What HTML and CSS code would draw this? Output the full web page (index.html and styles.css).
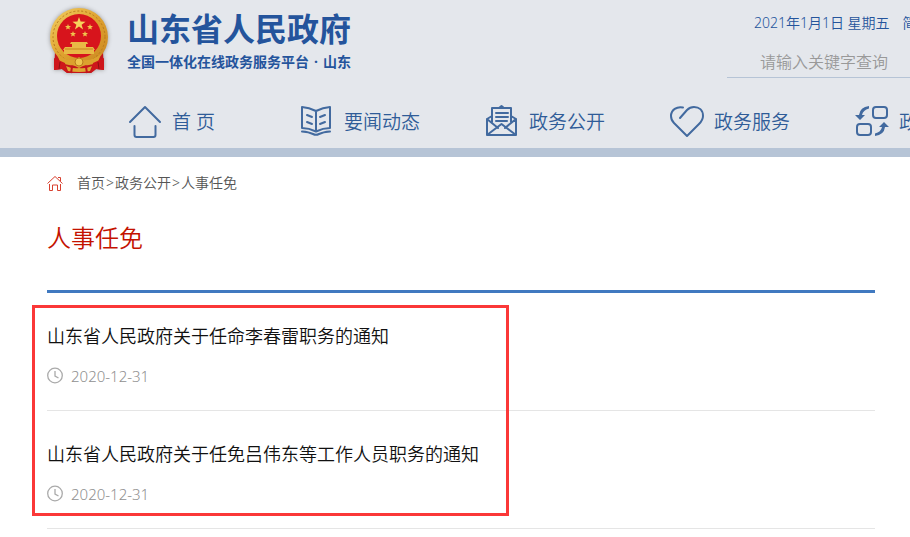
FILE: index.html
```html
<!DOCTYPE html>
<html lang="zh-CN">
<head>
  <meta charset="UTF-8">
  <title>人事任免</title>
  <meta name="viewport" content="width=device-width, initial-scale=1.0">
  <link rel="stylesheet" href="styles.css">
</head>
<body>
  <header class="header">
    <div class="top">
      <a class="brand" href="#">
        <svg class="emblem" viewBox="0 0 66 70" aria-hidden="true">
          <defs>
            <linearGradient id="gold" x1="0" y1="0" x2="1" y2="1">
              <stop offset="0" stop-color="#f3cf62"/>
              <stop offset="0.5" stop-color="#dfa22f"/>
              <stop offset="1" stop-color="#c9851f"/>
            </linearGradient>
          </defs>
          <path d="M8 46 L7 64 L15 63 L20 67 L44 67 L49 63 L57 64 L56 46Z" fill="#c4161c"/>
          <ellipse cx="32" cy="31" rx="29" ry="29" fill="url(#gold)"/>
          <ellipse cx="32" cy="31" rx="26" ry="26" fill="none" stroke="#b97a1c" stroke-width="1" stroke-dasharray="2 2"/>
          <ellipse cx="32" cy="30" rx="22" ry="22" fill="#d7141c"/>
          <path d="M32 11l1.600 4.600 5 .1-4 3 1.500 4.800-4.100-2.900-4.100 2.900 1.500-4.800-4-3 5-.1z" fill="#f6d35c"/>
          <g fill="#f0c44c">
            <path id="small-star" d="M21 18l.8 2 2.200.1-1.700 1.400.6 2.100-1.900-1.200-1.900 1.200.6-2.100-1.700-1.400 2.200-.1z"/>
            <use href="#small-star" x="22"/>
            <use href="#small-star" x="5" y="7"/>
            <use href="#small-star" x="17" y="7"/>
          </g>
          <path d="M24 36h16l1 2h-2v3h7l2 3h-1v4H17v-4h-1l2-3h7v-3h-2z" fill="#e9b945"/>
          <path d="M18 43h28" stroke="#c9851f" fill="none"/>
          <path d="M10 48q8 7 18 6l4-3 4 3q10 1 18-6l-3 8q-6 4-13 3l-6 3-6-3q-7 1-13-3z" fill="#dca12e"/>
          <circle cx="32" cy="56" r="4" fill="#efc54d" stroke="#b97a1c"/>
          <path d="M7 52l11 5 2 10-5-4-8 1zM57 52l-11 5-2 10 5-4 8 1z" fill="#ce161b"/>
          <path d="M19 60q6 3 13 2q7 1 13-2l-2 5q-11 2-22 0z" fill="#dfa632"/>
          <path d="M25 61l-1 6M39 61l1 6" stroke="#c4161c" stroke-width="2"/>
          <path d="M13 56l-1 7M51 56l1 7" stroke="#8e1014"/>
        </svg>
        <span class="brand-text">
          <span class="site-name">山东省人民政府</span>
          <span class="site-sub">全国一体化在线政务服务平台<span class="dot">·</span>山东</span>
        </span>
      </a>
      <div class="tools">
        <div class="today"><span>2021年1月1日 星期五</span><a href="#">简体</a></div>
        <input class="search" type="text" placeholder="请输入关键字查询" aria-label="请输入关键字查询">
      </div>
    </div>
    <nav class="nav">
      <a class="nav-item nav-home" href="#">
        <svg class="nav-icon" viewBox="0 0 34 34" aria-hidden="true">
          <path d="M1 16 L16 1 L31 16M5.500 20v9q0 2 2 2h17q2 0 2-2v-9"/>
        </svg>
        <span>首 页</span>
      </a>
      <a class="nav-item" href="#">
        <svg class="nav-icon" viewBox="0 0 34 34" aria-hidden="true">
          <path d="M15 5 Q8 1.500 1 1v21q7 0 14 3.500Q22 22 29 22V1Q22 1.500 15 5v20M1 25.500q7 .5 11 2.500 3 1.500 6 0 4-2 11-2.500M6 9l5 2M6 16l5 2M24 9l-5 2M24 16l-5 2"/>
        </svg>
        <span>要闻动态</span>
      </a>
      <a class="nav-item" href="#">
        <svg class="nav-icon" viewBox="0 0 34 34" aria-hidden="true">
          <path d="M6 10 L1 13v16h29V13l-5-3M1 13l11 9M30 13l-11 9M1 29l14.500-11L30 29M6 16V2h19v14M13 2l2.500-2L18 2M10 7h12M10 11h12M10 15h11"/>
        </svg>
        <span>政务公开</span>
      </a>
      <a class="nav-item" href="#">
        <svg class="nav-icon" viewBox="0 0 34 34" aria-hidden="true">
          <path d="M12 1.500C6 0 0 4 0 10q0 4 3 7l13 13 12-12q4-4 4-8c0-6-4-9-9-9-3 0-5 1-7 3l-7 8"/>
        </svg>
        <span>政务服务</span>
      </a>
      <a class="nav-item" href="#">
        <svg class="nav-icon" viewBox="0 0 34 34" aria-hidden="true">
          <rect x="17" y="1" width="14" height="11" rx="3"/>
          <rect x="1" y="18" width="14" height="11" rx="3"/>
          <path class="solid" d="M13 0Q4 1 3 9H-1l5 5 5-5H6Q7 4 13 2.500zM19 30q9-1 10-9h4l-5-5-5 5h3q-1 5-7 6.500z"/>
        </svg>
        <span>政民互动</span>
      </a>
    </nav>
  </header>

  <main class="main">
    <nav class="crumbs">
      <svg class="crumb-icon" viewBox="0 0 16 16" aria-hidden="true">
        <path d="M.5 8.500L8 1.500l7.500 7M11 2.500h2.500V6M2.500 9v6.500h3V10h5v5.500h3V9"/>
      </svg>
      <a href="#">首页</a>&gt;<a href="#">政务公开</a>&gt;<a href="#">人事任免</a>
    </nav>
    <h1 class="title">人事任免</h1>
    <div class="list-wrap">
      <ul class="list">
        <li class="item">
          <a class="item-title" href="#">山东省人民政府关于任命李春雷职务的通知</a>
          <div class="item-date">
            <svg class="clock" viewBox="0 0 16 16" aria-hidden="true"><circle cx="8" cy="7.500" r="7.300"/><path d="M8 3V8L11.500 10"/></svg>
            <time datetime="2020-12-31">2020-12-31</time>
          </div>
        </li>
        <li class="item">
          <a class="item-title" href="#">山东省人民政府关于任免吕伟东等工作人员职务的通知</a>
          <div class="item-date">
            <svg class="clock" viewBox="0 0 16 16" aria-hidden="true"><circle cx="8" cy="7.500" r="7.300"/><path d="M8 3V8L11.500 10"/></svg>
            <time datetime="2020-12-31">2020-12-31</time>
          </div>
        </li>
      </ul>
      <div class="mark"></div>
    </div>
  </main>
</body>
</html>
```
FILE: styles.css
```css
* {
  box-sizing: border-box;
}

body {
  margin: 0;
  font-family: "Noto Sans", "Noto Sans CJK SC", sans-serif;
  font-size: 14px;
  font-weight: 350;
  color: #111;
  background: #fff;
  overflow-x: hidden;
}

a {
  color: inherit;
  text-decoration: none;
}

/* header */
.header {
  background: #e4e7ec;
  border-bottom: 9px solid #b6c4d6;
  overflow: hidden;
}

.top {
  display: flex;
  justify-content: space-between;
  height: 95px;
  padding-left: 47px;
}

.brand {
  display: flex;
  gap: 14px;
  padding-top: 6px;
  color: #24549c;
  font-weight: 700;
}

.emblem {
  width: 66px;
  height: 70px;
  overflow: visible;
  filter: drop-shadow(0 0 2px #999);
}

.brand-text {
  display: flex;
  flex-direction: column;
  white-space: nowrap;
}

.site-name {
  font-size: 32px;
  line-height: 46px;
}

.site-sub {
  font-size: 14px;
  line-height: 20px;
}

.dot {
  padding: 0 5px;
}

.tools {
  width: 183px;
  padding-top: 13px;
}

.today {
  display: flex;
  gap: 13px;
  padding-left: 27px;
  line-height: 20px;
  white-space: nowrap;
  color: #24549c;
}

.search {
  display: block;
  width: 100%;
  height: 32px;
  margin-top: 13px;
  padding: 0 0 0 33px;
  border: 0;
  border-bottom: 1px solid #b6c4d6;
  background: none;
  outline: none;
  font: inherit;
  font-size: 16px;
}

.search::placeholder {
  color: #999;
}

.nav {
  display: flex;
  height: 53px;
  padding-left: 129px;
}

.nav-item {
  display: flex;
  flex: none;
  gap: 9px;
  width: 185px;
  padding-top: 11px;
  font-size: 19px;
  line-height: 32px;
  white-space: nowrap;
  color: #2f5c98;
}

.nav-home {
  width: 172px;
}

.nav-icon {
  width: 34px;
  height: 34px;
  overflow: visible;
  fill: none;
  stroke: #426a9f;
  stroke-width: 2;
  stroke-linecap: round;
  stroke-linejoin: round;
}

.nav-icon .solid {
  fill: #426a9f;
  stroke: none;
}

/* content */
.main {
  padding: 16px 35px 0 47px;
}

.crumbs {
  display: flex;
  align-items: center;
  gap: 1px;
  line-height: 20px;
  color: #555;
}

.crumb-icon {
  width: 16px;
  height: 16px;
  margin-right: 13px;
  fill: none;
  stroke: #d8402f;
}

.title {
  margin: 27px 0 0;
  padding-bottom: 34px;
  border-bottom: 3px solid #4079c0;
  font-size: 24px;
  font-weight: 350;
  line-height: 36px;
  color: #c41200;
}

.list-wrap {
  position: relative;
}

.list {
  margin: 0;
  padding: 0;
  list-style: none;
}

.item {
  padding: 30px 0 23px;
  border-bottom: 1px solid #e5e5e5;
}

.item-title {
  display: block;
  font-size: 18px;
  line-height: 26px;
}

.item-date {
  display: flex;
  align-items: center;
  gap: 8px;
  margin-top: 16px;
  font-size: 15px;
  line-height: 22px;
  color: #909090;
}

.clock {
  width: 16px;
  height: 16px;
  overflow: visible;
  fill: none;
  stroke: #aaa;
  stroke-width: 1.3;
}

/* red frame round the notices */
.mark {
  position: absolute;
  top: 12px;
  left: -15px;
  width: 477px;
  height: 211px;
  border: 3px solid #fb3838;
  pointer-events: none;
}
```
